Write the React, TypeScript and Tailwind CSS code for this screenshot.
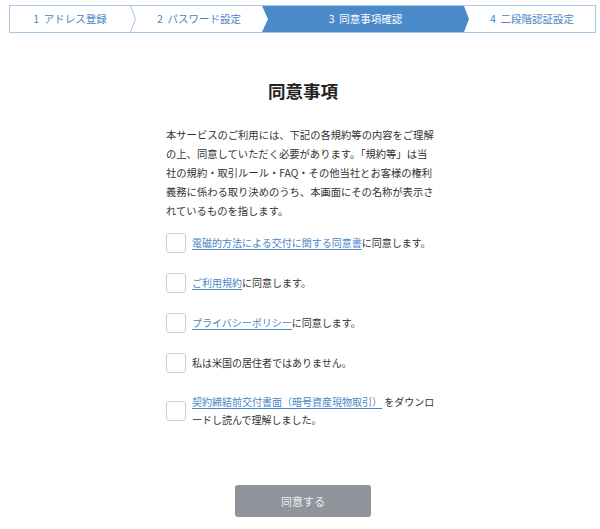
import React from 'react'

const font = { fontFamily: '"Noto Sans CJK JP", "Noto Sans", sans-serif' }

function StepBar() {
  return (
    <div className="ml-[9px] mt-[5px] flex h-[28px] w-[587px] border border-[#a9c8e8] bg-white text-[10.5px] text-[#4a86c5]">
      <div className="flex w-[120px] flex-none items-center justify-center">1&nbsp;&nbsp;アドレス登録</div>
      <svg className="h-full w-[6px] flex-none" viewBox="0 0 6 26" preserveAspectRatio="none">
        <polyline points="0.5,0 5.5,13 0.5,26" fill="none" stroke="#a9c8e8" strokeWidth="1" />
      </svg>
      <div className="flex w-[126px] flex-none items-center justify-center">2&nbsp;&nbsp;パスワード設定</div>
      <div className="flex w-[207px] flex-none items-center justify-center bg-[#4a8ac9] text-white [clip-path:polygon(0_0,calc(100%-5px)_0,100%_50%,calc(100%-5px)_100%,0_100%,6px_50%)]">
        3&nbsp;&nbsp;同意事項確認
      </div>
      <div className="flex flex-1 items-center justify-center">4&nbsp;&nbsp;二段階認証設定</div>
    </div>
  )
}

function Check({ children }: { children: React.ReactNode }) {
  return (
    <label className="flex items-center gap-[6px]">
      <span className="h-[20px] w-[20px] flex-none rounded-[3px] border border-[#cfcfcf] bg-white" />
      <span className="whitespace-nowrap text-[10px] leading-[18px] text-[#333]">{children}</span>
    </label>
  )
}

function Lnk({ children }: { children: React.ReactNode }) {
  return <a className="text-[#4a86c5] underline underline-offset-2">{children}</a>
}

export default function App() {
  return (
    <div className="h-[529px] w-[600px] bg-white" style={font}>
      <StepBar />
      <div className="mx-auto mt-[45px] w-[268px]">
        <h1 className="pl-[6px] text-center text-[17.5px] font-bold leading-[26px] text-[#222]">同意事項</h1>
        <p className="mt-[21px] text-[10.3px] leading-[19px] text-[#333]">
          本サービスのご利用には、下記の各規約等の内容をご理解
          <br />
          の上、同意していただく必要があります。「規約等」は当
          <br />
          社の規約・取引ルール・FAQ・その他当社とお客様の権利
          <br />
          義務に係わる取り決めのうち、本画面にその名称が表示さ
          <br />
          れているものを指します。
        </p>
        <div className="mt-[13px] flex flex-col gap-[20px]">
          <Check>
            <Lnk>電磁的方法による交付に関する同意書</Lnk>に同意します。
          </Check>
          <Check>
            <Lnk>ご利用規約</Lnk>に同意します。
          </Check>
          <Check>
            <Lnk>プライバシーポリシー</Lnk>に同意します。
          </Check>
          <Check>私は米国の居住者ではありません。</Check>
          <Check>
            <Lnk>契約締結前交付書面（暗号資産現物取引）</Lnk> をダウンロ
            <br />
            ードし読んで理解しました。
          </Check>
        </div>
      </div>
      <div className="mt-[56px] flex justify-center pl-[6px]">
        <button className="h-[32px] w-[136px] rounded-[3px] bg-[#8f959b] text-[11px] text-[#eef0f2]">同意する</button>
      </div>
    </div>
  )
}
